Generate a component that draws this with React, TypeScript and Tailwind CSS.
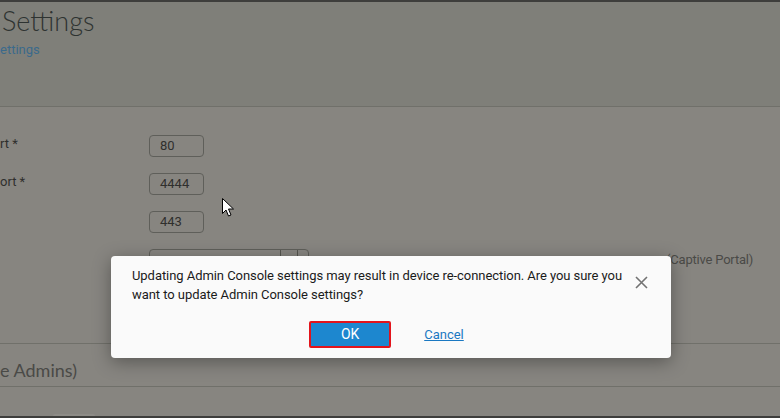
import React from "react";

export default function App() {
  return (
    <div className="relative w-[780px] h-[418px] overflow-hidden bg-[#878580] flex flex-col font-['Roboto',sans-serif]">
      <div className="h-[2px] bg-[#3e3e3c] shrink-0" />
      <header className="h-[105px] shrink-0 bg-[#7f7f79] border-b border-[#70706a] overflow-hidden">
        <h1 className="pl-[2px] pt-[3px] text-[27px] leading-[32px] font-light text-[#2e3331] font-['Lato',sans-serif]">
          Settings
        </h1>
        <div className="mt-[5px] text-[13px] leading-[16px] text-[#3b6a8b]">ettings</div>
      </header>

      <section className="h-[237px] shrink-0 border-b border-[#70706a] pt-[28px] flex flex-col gap-[16px]">
        <div className="flex items-start h-[22px]">
          <div className="w-[149px] text-[13px] leading-[16px] pt-[1px] text-[#2f2f2d]">rt *</div>
          <div className="w-[55px] h-[22px] border border-[#5f5f5a] rounded-[4px] pl-[10px] text-[13px] leading-[20px] text-[#2f2f2d]">80</div>
        </div>
        <div className="flex items-start h-[22px]">
          <div className="w-[149px] text-[13px] leading-[16px] pt-[1px] text-[#2f2f2d]">ort *</div>
          <div className="w-[55px] h-[22px] border border-[#5f5f5a] rounded-[4px] pl-[10px] text-[13px] leading-[20px] text-[#2f2f2d]">4444</div>
        </div>
        <div className="flex items-start h-[22px]">
          <div className="w-[149px]" />
          <div className="w-[55px] h-[22px] border border-[#5f5f5a] rounded-[4px] pl-[10px] text-[13px] leading-[20px] text-[#2f2f2d]">443</div>
        </div>
        <div className="flex items-center h-[22px]">
          <div className="w-[149px]" />
          <div className="w-[160px] h-[22px] border border-[#5f5f5a] rounded-[4px] flex justify-end pr-[10px]">
            <div className="w-[18px] h-full border-x border-[#55554f]" />
          </div>
          <div className="ml-[357px] text-[13px] leading-[16px] text-[#4a4a47] whitespace-nowrap tracking-[-0.2px]">(Captive Portal)</div>
        </div>
      </section>

      <section className="h-[43px] shrink-0 border-b border-[#70706a] flex items-start pt-[15px]">
        <div className="text-[18px] leading-[22px] text-[#4a4a47] font-['Lato',sans-serif]">e Admins)</div>
      </section>

      <div className="flex-1 relative">
        <div className="absolute bottom-0 left-[53px] w-[42px] h-[2px] bg-[#8e8c87] rounded-t" />
      </div>
      <div className="h-[2px] bg-[#3e3e3c] shrink-0" />

      <svg className="absolute left-[222px] top-[198px]" width="13" height="20" viewBox="0 0 13 20">
        <path d="M0.5 0.5 L0.5 15.5 L4 12 L6.5 18 L9 17 L6.5 11 L11.5 11 Z" fill="#fff" stroke="#000" strokeWidth="1" />
      </svg>

      <div className="absolute inset-0 flex justify-center items-start pt-[256px] pl-[2px]">
        <div className="w-[560px] h-[102px] bg-[#fafafa] rounded-[4px] shadow-[0_4px_18px_rgba(0,0,0,0.35)] flex flex-col">
          <div className="flex items-start pl-[21px] pt-[10px]">
            <p className="w-[493px] text-[13px] leading-[19px] tracking-[-0.06px] text-[#1b1b1b]">
              Updating Admin Console settings may result in device re-connection. Are you sure you want to update Admin Console settings?
            </p>
            <button className="ml-[9px] mt-[9px] w-[14px] h-[14px] flex items-center justify-center">
              <svg width="13" height="13" viewBox="0 0 13 13">
                <path d="M1 1 L12 12 M12 1 L1 12" stroke="#727272" strokeWidth="1.6" />
              </svg>
            </button>
          </div>
          <div className="flex justify-center items-center gap-[33px] mt-[17px] pr-[9px]">
            <button className="w-[82px] h-[27px] border-2 border-[#e3141b] rounded-[2px] bg-[#1d87cf] text-white text-[14px] leading-[23px]">
              OK
            </button>
            <button className="text-[13px] leading-[16px] text-[#1a78c2] underline">Cancel</button>
          </div>
        </div>
      </div>
    </div>
  );
}
